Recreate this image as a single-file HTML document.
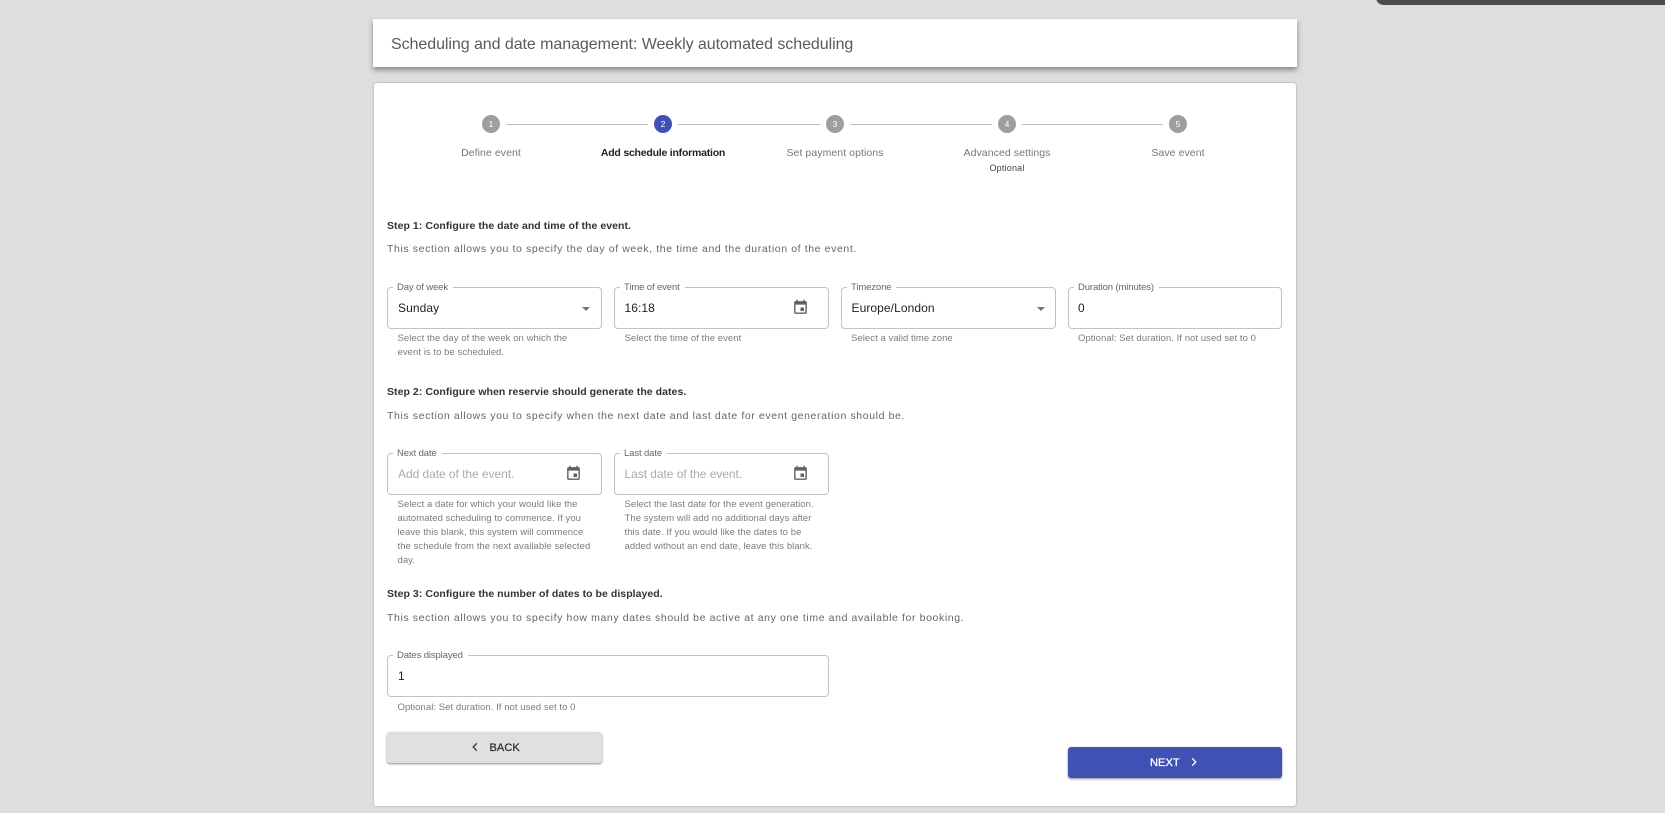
<!DOCTYPE html>
<html><head><meta charset="utf-8"><style>
html,body{margin:0;padding:0;width:1665px;height:813px;overflow:hidden;background:#dedede;font-family:"Liberation Sans",sans-serif}
div,span,svg{position:absolute;white-space:nowrap;box-sizing:border-box}
#w{left:0;top:0;width:1665px;height:813px;filter:blur(.35px)}
.bar{left:1376px;top:-10px;width:300px;height:15px;background:#4a4a4a;border-radius:8px}
.hdr{left:373px;top:19px;width:924px;height:48px;background:#fff;box-shadow:0 3px 5px rgba(0,0,0,.4)}
.ttl{left:391px;top:35px;line-height:20px;font-size:16px;color:#5a5a5a;letter-spacing:-.06px}
.card{left:374px;top:83px;width:922px;height:723px;background:#fff;border-radius:3px;box-shadow:0 0 2px rgba(0,0,0,.3)}
.c{width:18px;height:18px;top:115px;border-radius:50%;background:#9e9e9e;color:#fff;font-size:8.5px;line-height:18px;text-align:center}
.l{height:1px;top:124px;background:#bdbdbd}
.sl{top:146px;width:200px;text-align:center;font-size:10.5px;line-height:14px;color:#777;letter-spacing:.07px}
.h{left:387px;font-size:10.5px;font-weight:bold;line-height:14px;color:#333;letter-spacing:.05px}
.p{left:387px;font-size:10.5px;line-height:14px;color:#666;letter-spacing:.61px}
.b{border:1px solid #c2c2c2;border-radius:4px;height:42px;background:#fff}
.lb{font-size:9.5px;line-height:12px;color:#666;background:#fff;padding:0 5px 0 4px;letter-spacing:-.12px;margin-top:1px}
.v{font-size:12px;line-height:16px;color:#222;letter-spacing:.08px}
.ph{font-size:12px;line-height:16px;color:#aaa;letter-spacing:-.05px}
.t{font-size:9.5px;line-height:14px;color:#7c7c7c;letter-spacing:.06px;left:397.5px;margin-top:1px}
.ar{width:0;height:0;border-left:4px solid transparent;border-right:4px solid transparent;border-top:4px solid #757575}
.i{width:17px;height:17px;fill:#616161}
.btn{height:31px;width:215px;border-radius:3px}
.bt{font-size:11px;line-height:14px;letter-spacing:.1px;-webkit-text-stroke:.3px currentColor}
</style></head><body><div id="w">
<div class="bar"></div>
<div class="hdr"></div>
<div class="ttl">Scheduling and date management: Weekly automated scheduling</div>
<div class="card"></div>

<div class="c" style="left:482px">1</div>
<div class="l" style="left:506px;width:142px"></div>
<div class="c" style="left:654px;background:#3f51b5">2</div>
<div class="l" style="left:678px;width:142px"></div>
<div class="c" style="left:826px">3</div>
<div class="l" style="left:850px;width:142px"></div>
<div class="c" style="left:998px">4</div>
<div class="l" style="left:1022px;width:141px"></div>
<div class="c" style="left:1169px">5</div>
<div class="sl" style="left:391px">Define event</div>
<div class="sl" style="left:563px;color:#222;font-weight:bold;letter-spacing:-.22px">Add schedule information</div>
<div class="sl" style="left:735px">Set payment options</div>
<div class="sl" style="left:907px">Advanced settings</div>
<div class="sl" style="left:907px;top:161px;font-size:9px;color:#444;letter-spacing:.2px">Optional</div>
<div class="sl" style="left:1078px">Save event</div>

<div class="h" style="top:219px">Step 1: Configure the date and time of the event.</div>
<div class="p" style="top:242px">This section allows you to specify the day of week, the time and the duration of the event.</div>

<div class="b" style="left:387px;top:287px;width:215px"></div>
<div class="lb" style="left:393px;top:281px">Day of week</div>
<div class="v" style="left:398px;top:300px">Sunday</div>
<div class="ar" style="left:582px;top:306.5px"></div>
<div class="t" style="top:331px">Select the day of the week on which the</div>
<div class="t" style="top:345px">event is to be scheduled.</div>

<div class="b" style="left:614px;top:287px;width:215px"></div>
<div class="lb" style="left:620px;top:281px">Time of event</div>
<div class="v" style="left:624.5px;top:300px">16:18</div>
<svg class="i" style="left:792px;top:299px" viewBox="0 0 24 24"><path d="M17 12h-5v5h5v-5zM16 1v2H8V1H6v2H5c-1.11 0-1.99.9-1.99 2L3 19c0 1.1.89 2 2 2h14c1.1 0 2-.9 2-2V5c0-1.1-.9-2-2-2h-1V1h-2zm3 18H5V8h14v11z"/></svg>
<div class="t" style="left:624.5px;top:331px">Select the time of the event</div>

<div class="b" style="left:841px;top:287px;width:215px"></div>
<div class="lb" style="left:847px;top:281px">Timezone</div>
<div class="v" style="left:851.5px;top:300px">Europe/London</div>
<div class="ar" style="left:1037px;top:306.5px"></div>
<div class="t" style="left:851px;top:331px">Select a valid time zone</div>

<div class="b" style="left:1068px;top:287px;width:214px"></div>
<div class="lb" style="left:1074px;top:281px">Duration (minutes)</div>
<div class="v" style="left:1078px;top:300px">0</div>
<div class="t" style="left:1078px;top:331px">Optional: Set duration. If not used set to 0</div>

<div class="h" style="top:385px">Step 2: Configure when reservie should generate the dates.</div>
<div class="p" style="top:409px">This section allows you to specify when the next date and last date for event generation should be.</div>

<div class="b" style="left:387px;top:453px;width:215px"></div>
<div class="lb" style="left:393px;top:447px">Next date</div>
<div class="ph" style="left:398px;top:466px">Add date of the event.</div>
<svg class="i" style="left:565px;top:465px" viewBox="0 0 24 24"><path d="M17 12h-5v5h5v-5zM16 1v2H8V1H6v2H5c-1.11 0-1.99.9-1.99 2L3 19c0 1.1.89 2 2 2h14c1.1 0 2-.9 2-2V5c0-1.1-.9-2-2-2h-1V1h-2zm3 18H5V8h14v11z"/></svg>
<div class="t" style="top:497px">Select a date for which your would like the</div>
<div class="t" style="top:511px">automated scheduling to commence. If you</div>
<div class="t" style="top:525px">leave this blank, this system will commence</div>
<div class="t" style="top:539px">the schedule from the next available selected</div>
<div class="t" style="top:553px">day.</div>

<div class="b" style="left:614px;top:453px;width:215px"></div>
<div class="lb" style="left:620px;top:447px">Last date</div>
<div class="ph" style="left:624.5px;top:466px">Last date of the event.</div>
<svg class="i" style="left:792px;top:465px" viewBox="0 0 24 24"><path d="M17 12h-5v5h5v-5zM16 1v2H8V1H6v2H5c-1.11 0-1.99.9-1.99 2L3 19c0 1.1.89 2 2 2h14c1.1 0 2-.9 2-2V5c0-1.1-.9-2-2-2h-1V1h-2zm3 18H5V8h14v11z"/></svg>
<div class="t" style="left:624.5px;top:497px">Select the last date for the event generation.</div>
<div class="t" style="left:624.5px;top:511px">The system will add no additional days after</div>
<div class="t" style="left:624.5px;top:525px">this date. If you would like the dates to be</div>
<div class="t" style="left:624.5px;top:539px">added without an end date, leave this blank.</div>

<div class="h" style="top:587px">Step 3: Configure the number of dates to be displayed.</div>
<div class="p" style="top:611px">This section allows you to specify how many dates should be active at any one time and available for booking.</div>

<div class="b" style="left:387px;top:655px;width:442px"></div>
<div class="lb" style="left:393px;top:649px">Dates displayed</div>
<div class="v" style="left:398px;top:668px">1</div>
<div class="t" style="top:700px">Optional: Set duration. If not used set to 0</div>

<div class="btn" style="left:387px;top:732px;background:#e0e0e0;box-shadow:0 1px 2px rgba(0,0,0,.45)"></div>
<svg style="left:471px;top:742px;width:8px;height:10px" viewBox="0 0 8 10"><path d="M5.8 1.3 2.2 5l3.6 3.7" fill="none" stroke="#333" stroke-width="1.3"/></svg>
<div class="bt" style="left:489.5px;top:741px;color:#333">BACK</div>

<div class="btn" style="left:1068px;top:747px;width:214px;background:#3f51b5;box-shadow:0 1px 2px rgba(0,0,0,.45)"></div>
<div class="bt" style="left:1150px;top:756px;color:#fff">NEXT</div>
<svg style="left:1190px;top:757px;width:8px;height:10px" viewBox="0 0 8 10"><path d="M2.2 1.3 5.8 5 2.2 8.7" fill="none" stroke="#fff" stroke-width="1.3"/></svg>
</div></body></html>
